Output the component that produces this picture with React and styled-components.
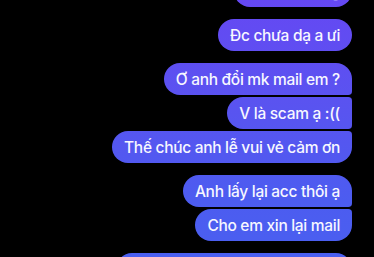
import React from 'react';
import styled, { createGlobalStyle } from 'styled-components';

const Global = createGlobalStyle`
  html, body {
    margin: 0;
    padding: 0;
    background: #000;
    overflow: hidden;
  }
  body {
    font-family: Inter, "Noto Sans", "Liberation Sans", sans-serif;
  }
`;

const Thread = styled.div`
  display: flex;
  flex-direction: column;
  align-items: flex-end;
  padding: 0 22px 0 0;
  margin-top: -37px;
  width: 374px;
  box-sizing: border-box;
`;

const big = 17;
const small = 4;

const Bubble = styled.div`
  box-sizing: border-box;
  flex-shrink: 0;
  height: 32px;
  min-width: ${(p) => p.$min || 0}px;
  padding: 0 12px;
  display: flex;
  align-items: center;
  justify-content: flex-end;
  color: #f7f7ff;
  font-size: 15.5px;
  font-weight: 500;
  letter-spacing: -0.3px;
  white-space: nowrap;
  margin-top: ${(p) => (p.$first ? '12px' : '2px')};
  border-radius: ${big}px ${(p) => (p.$first ? big : small)}px ${(p) => (p.$last ? big : small)}px ${big}px;
  background: linear-gradient(180deg, #6548f3 0px, #5a53f0 100px, #4c5cf0 200px, #4a5ff0 257px);
  background-attachment: fixed;
`;

const messages = [
  [{ text: 'Vâng', min: 118 }],
  [{ text: 'Đc chưa dạ a ưi' }],
  [{ text: 'Ơ anh đổi mk mail em ?' }, { text: 'V là scam ạ :((' }, { text: 'Thế chúc anh lễ vui vẻ cảm ơn' }],
  [{ text: 'Anh lấy lại acc thôi ạ' }, { text: 'Cho em xin lại mail' }],
  [{ text: 'Em cảm ơn anh nhiều nha', min: 236 }],
];

export default function App() {
  return (
    <>
      <Global />
      <Thread>
        {messages.map((group, gi) =>
          group.map((m, i) => (
            <Bubble
              key={`${gi}-${i}`}
              $first={i === 0}
              $last={i === group.length - 1}
              $min={m.min}
            >
              {m.text}
            </Bubble>
          ))
        )}
      </Thread>
    </>
  );
}
